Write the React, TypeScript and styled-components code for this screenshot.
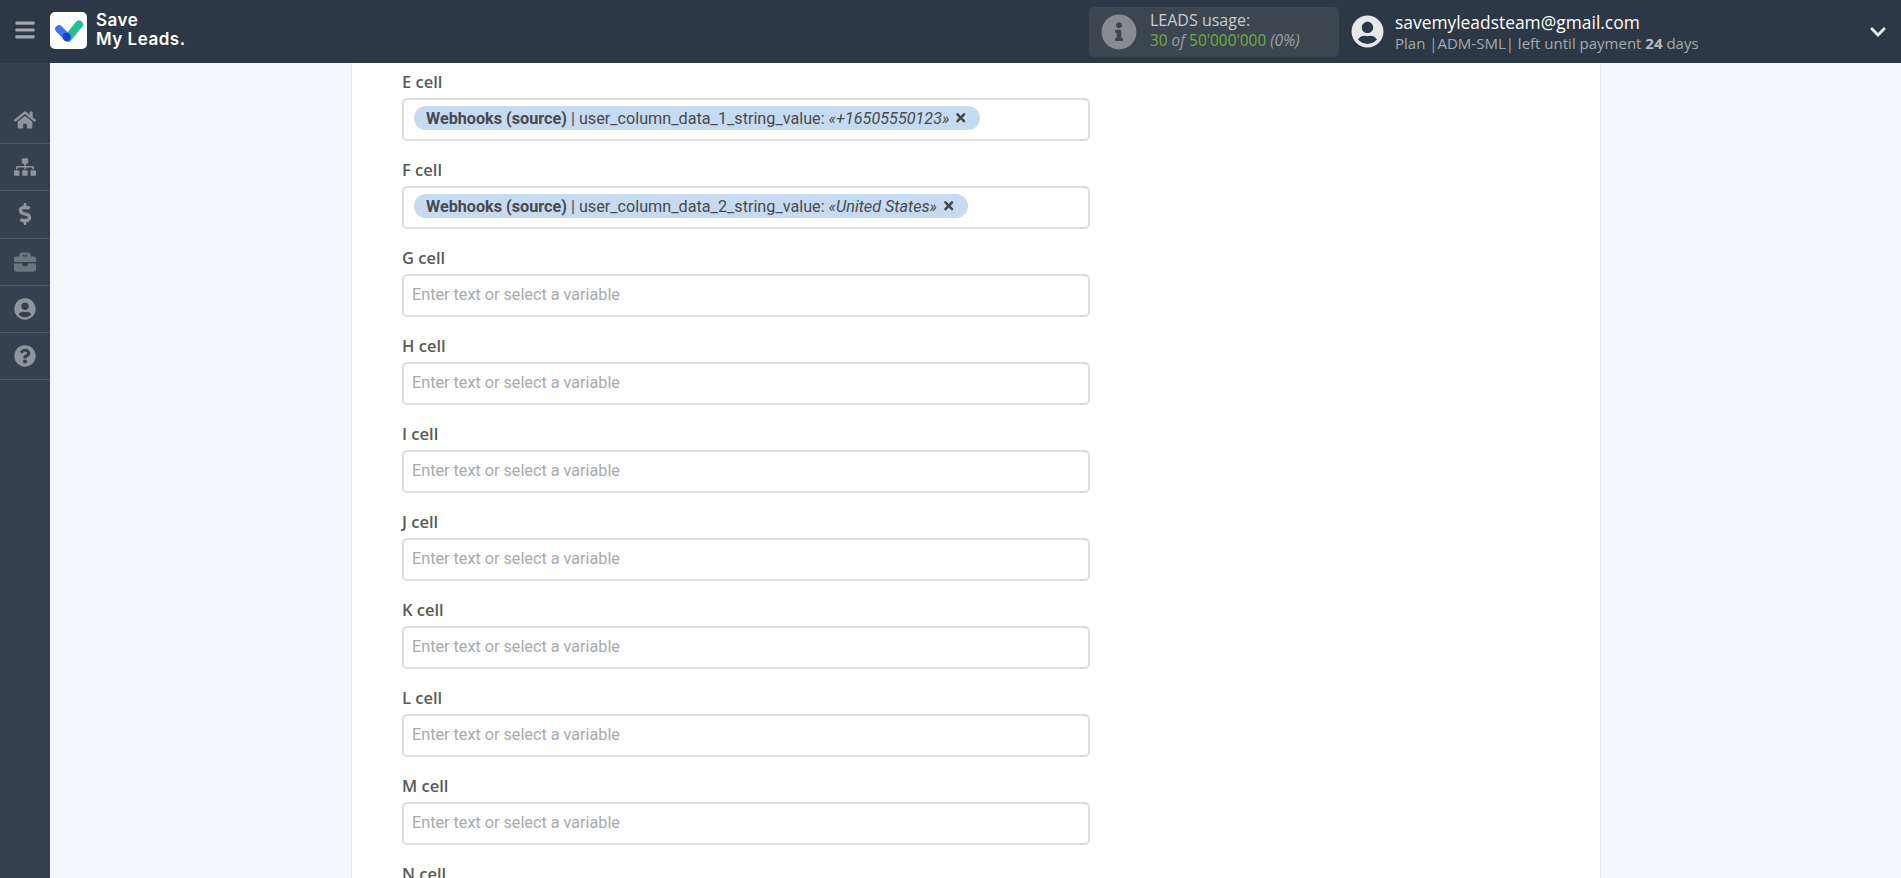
import React from "react";
import styled, { createGlobalStyle } from "styled-components";
import { FaHome, FaSitemap, FaDollarSign, FaBriefcase, FaUserCircle, FaQuestionCircle, FaInfoCircle, FaBars, FaChevronDown, FaTimes } from "react-icons/fa";

const Global = createGlobalStyle`
  html, body { margin: 0; padding: 0; height: 100%; overflow: hidden; background: #f4f7fc; }
  #root { height: 100%; }
  * { box-sizing: border-box; }
`;

const Page = styled.div`
  width: 1901px;
  height: 878px;
  display: flex;
  flex-direction: column;
  overflow: hidden;
`;

const Header = styled.header`
  height: 63px;
  flex: none;
  background: #2c3845;
  display: flex;
  align-items: center;
`;

const Brand = styled.div`
  display: flex;
  align-items: center;
  margin-bottom: 3px;
`;

const Burger = styled.div`
  width: 50px;
  flex: none;
  display: flex;
  justify-content: center;
  color: #a3a8ad;
  font-size: 22px;
  line-height: 0;
`;

const LogoTile = styled.div`
  width: 37px;
  height: 37px;
  flex: none;
  border-radius: 5px;
  background: #fff;
  line-height: 0;
`;

const LogoText = styled.div`
  margin-left: 9px;
  color: #fff;
  font-family: "Inter", "Open Sans", sans-serif;
  font-weight: 600;
  font-size: 17px;
  line-height: 19px;
  letter-spacing: 0.5px;
`;

const Spacer = styled.div`
  flex: 1;
`;

const Usage = styled.div`
  width: 250px;
  height: 50px;
  flex: none;
  border-radius: 5px;
  background: #3b4650;
  display: flex;
  align-items: center;
  padding-left: 12px;
  font-family: "Open Sans", sans-serif;
`;

const UsageIcon = styled.div`
  color: #868c92;
  font-size: 36px;
  line-height: 0;
  margin-right: 13px;
`;

const UsageTitle = styled.div`
  color: #c9ccd0;
  font-size: 16px;
  line-height: 20px;
  margin-top: -2px;
`;

const UsageCount = styled.div`
  color: #6fae3f;
  font-size: 15.4px;
  line-height: 21px;
  white-space: nowrap;
  em { color: #9ca1a6; font-style: italic; }
`;

const Account = styled.div`
  width: 550px;
  flex: none;
  margin-left: 12px;
  height: 50px;
  display: flex;
  align-items: center;
  font-family: "Open Sans", sans-serif;
`;

const AccountIcon = styled.div`
  color: #e6e7e9;
  font-size: 33px;
  line-height: 0;
  margin-right: 11px;
`;

const AccountText = styled.div`
  flex: 1;
  padding-top: 2px;
`;

const Email = styled.div`
  color: #fff;
  font-size: 17.4px;
  line-height: 21px;
`;

const Plan = styled.div`
  color: #a6abb0;
  font-size: 15px;
  line-height: 20px;
  white-space: nowrap;
  b { font-weight: 700; color: #b8bbbe; }
`;

const Caret = styled.div`
  width: 46px;
  flex: none;
  display: flex;
  justify-content: center;
  color: #e6e7e9;
  font-size: 18px;
  line-height: 0;
`;

const Body = styled.div`
  flex: 1;
  display: flex;
  min-height: 0;
`;

const Sidebar = styled.nav`
  width: 50px;
  flex: none;
  background: #35414e;
  padding-top: 34px;
`;

const NavItem = styled.div<{ $dim?: boolean }>`
  height: 47.2px;
  display: flex;
  align-items: center;
  justify-content: center;
  color: ${(p) => (p.$dim ? "#6c7681" : "#8f959c")};
  font-size: 22px;
  border-bottom: 1px solid #4c5763;
`;

const Main = styled.main`
  flex: 1;
  display: flex;
  background: #f4f7fc;
  padding-left: 301px;
  min-width: 0;
`;

const Panel = styled.section`
  width: 1250px;
  flex: none;
  background: #fff;
  border-left: 1px solid #e8edf5;
  border-right: 1px solid #e8edf5;
  padding: 7px 0 0 50px;
  overflow: hidden;
`;

const Field = styled.div`
  margin-bottom: 17px;
  width: 688px;
`;

const Label = styled.div`
  height: 28px;
  padding-top: 1px;
  color: #5a5a5a;
  font-family: "Open Sans", sans-serif;
  font-size: 16.5px;
  font-weight: 600;
  line-height: 22px;
`;

const Box = styled.div`
  height: 43px;
  border: 2px solid #dedede;
  border-radius: 5px;
  background: #fff;
  display: flex;
  align-items: center;
  padding-left: 10px;
  font-family: "Roboto", sans-serif;
  font-size: 16.2px;
`;

const Placeholder = styled.span`
  margin: 0 0 2px -2px;
  color: #a9a9a9;
`;

const Chip = styled.span`
  height: 24px;
  margin-bottom: 3px;
  border-radius: 12px;
  background: #c5daf3;
  color: #4a4a4a;
  display: inline-flex;
  align-items: center;
  padding: 0 12px;
  white-space: nowrap;
  b { font-weight: 700; }
`;

const ChipClose = styled.span`
  display: inline-flex;
  margin-left: 5px;
  font-size: 13.5px;
  color: #45464a;
`;

const Logo = () => (
  <svg width="37" height="37" viewBox="0 0 37 37" fill="none">
    <path d="M18 26 L29 12.5" stroke="#1fc48c" strokeWidth="8" strokeLinecap="round" />
    <path d="M9 17 L17 25" stroke="#3a76f5" strokeWidth="7.5" strokeLinecap="round" />
    <circle cx="16.7" cy="25" r="4.2" fill="#1b3fd8" />
  </svg>
);

const filled: Record<string, [string, string]> = {
  E: ["user_column_data_1_string_value", "«+16505550123»"],
  F: ["user_column_data_2_string_value", "«United States»"],
};

const cells = ["E", "F", "G", "H", "I", "J", "K", "L", "M", "N"];

const navIcons = [FaHome, FaSitemap, FaDollarSign, FaBriefcase, FaUserCircle, FaQuestionCircle];

export default function App() {
  return (
    <Page>
      <Global />
      <Header>
        <Brand>
          <Burger><FaBars /></Burger>
          <LogoTile><Logo /></LogoTile>
          <LogoText>Save<br />My Leads.</LogoText>
        </Brand>
        <Spacer />
        <Usage>
          <UsageIcon><FaInfoCircle /></UsageIcon>
          <div>
            <UsageTitle>LEADS usage:</UsageTitle>
            <UsageCount>30 <em>of</em> 50'000'000 <em>(0%)</em></UsageCount>
          </div>
        </Usage>
        <Account>
          <AccountIcon><FaUserCircle /></AccountIcon>
          <AccountText>
            <Email>savemyleadsteam@gmail.com</Email>
            <Plan>Plan |ADM-SML| left until payment <b>24</b> days</Plan>
          </AccountText>
          <Caret><FaChevronDown /></Caret>
        </Account>
      </Header>
      <Body>
        <Sidebar>
          {navIcons.map((Icon, i) => (
            <NavItem key={i} $dim={i === 3}><Icon /></NavItem>
          ))}
        </Sidebar>
        <Main>
          <Panel>
            {cells.map((c) => (
              <Field key={c}>
                <Label>{c} cell</Label>
                <Box>
                  {filled[c] ? (
                    <Chip>
                      <span><b>Webhooks (source)</b> | {filled[c][0]}: <i>{filled[c][1]}</i></span>
                      <ChipClose><FaTimes /></ChipClose>
                    </Chip>
                  ) : (
                    <Placeholder>Enter text or select a variable</Placeholder>
                  )}
                </Box>
              </Field>
            ))}
          </Panel>
        </Main>
      </Body>
    </Page>
  );
}
